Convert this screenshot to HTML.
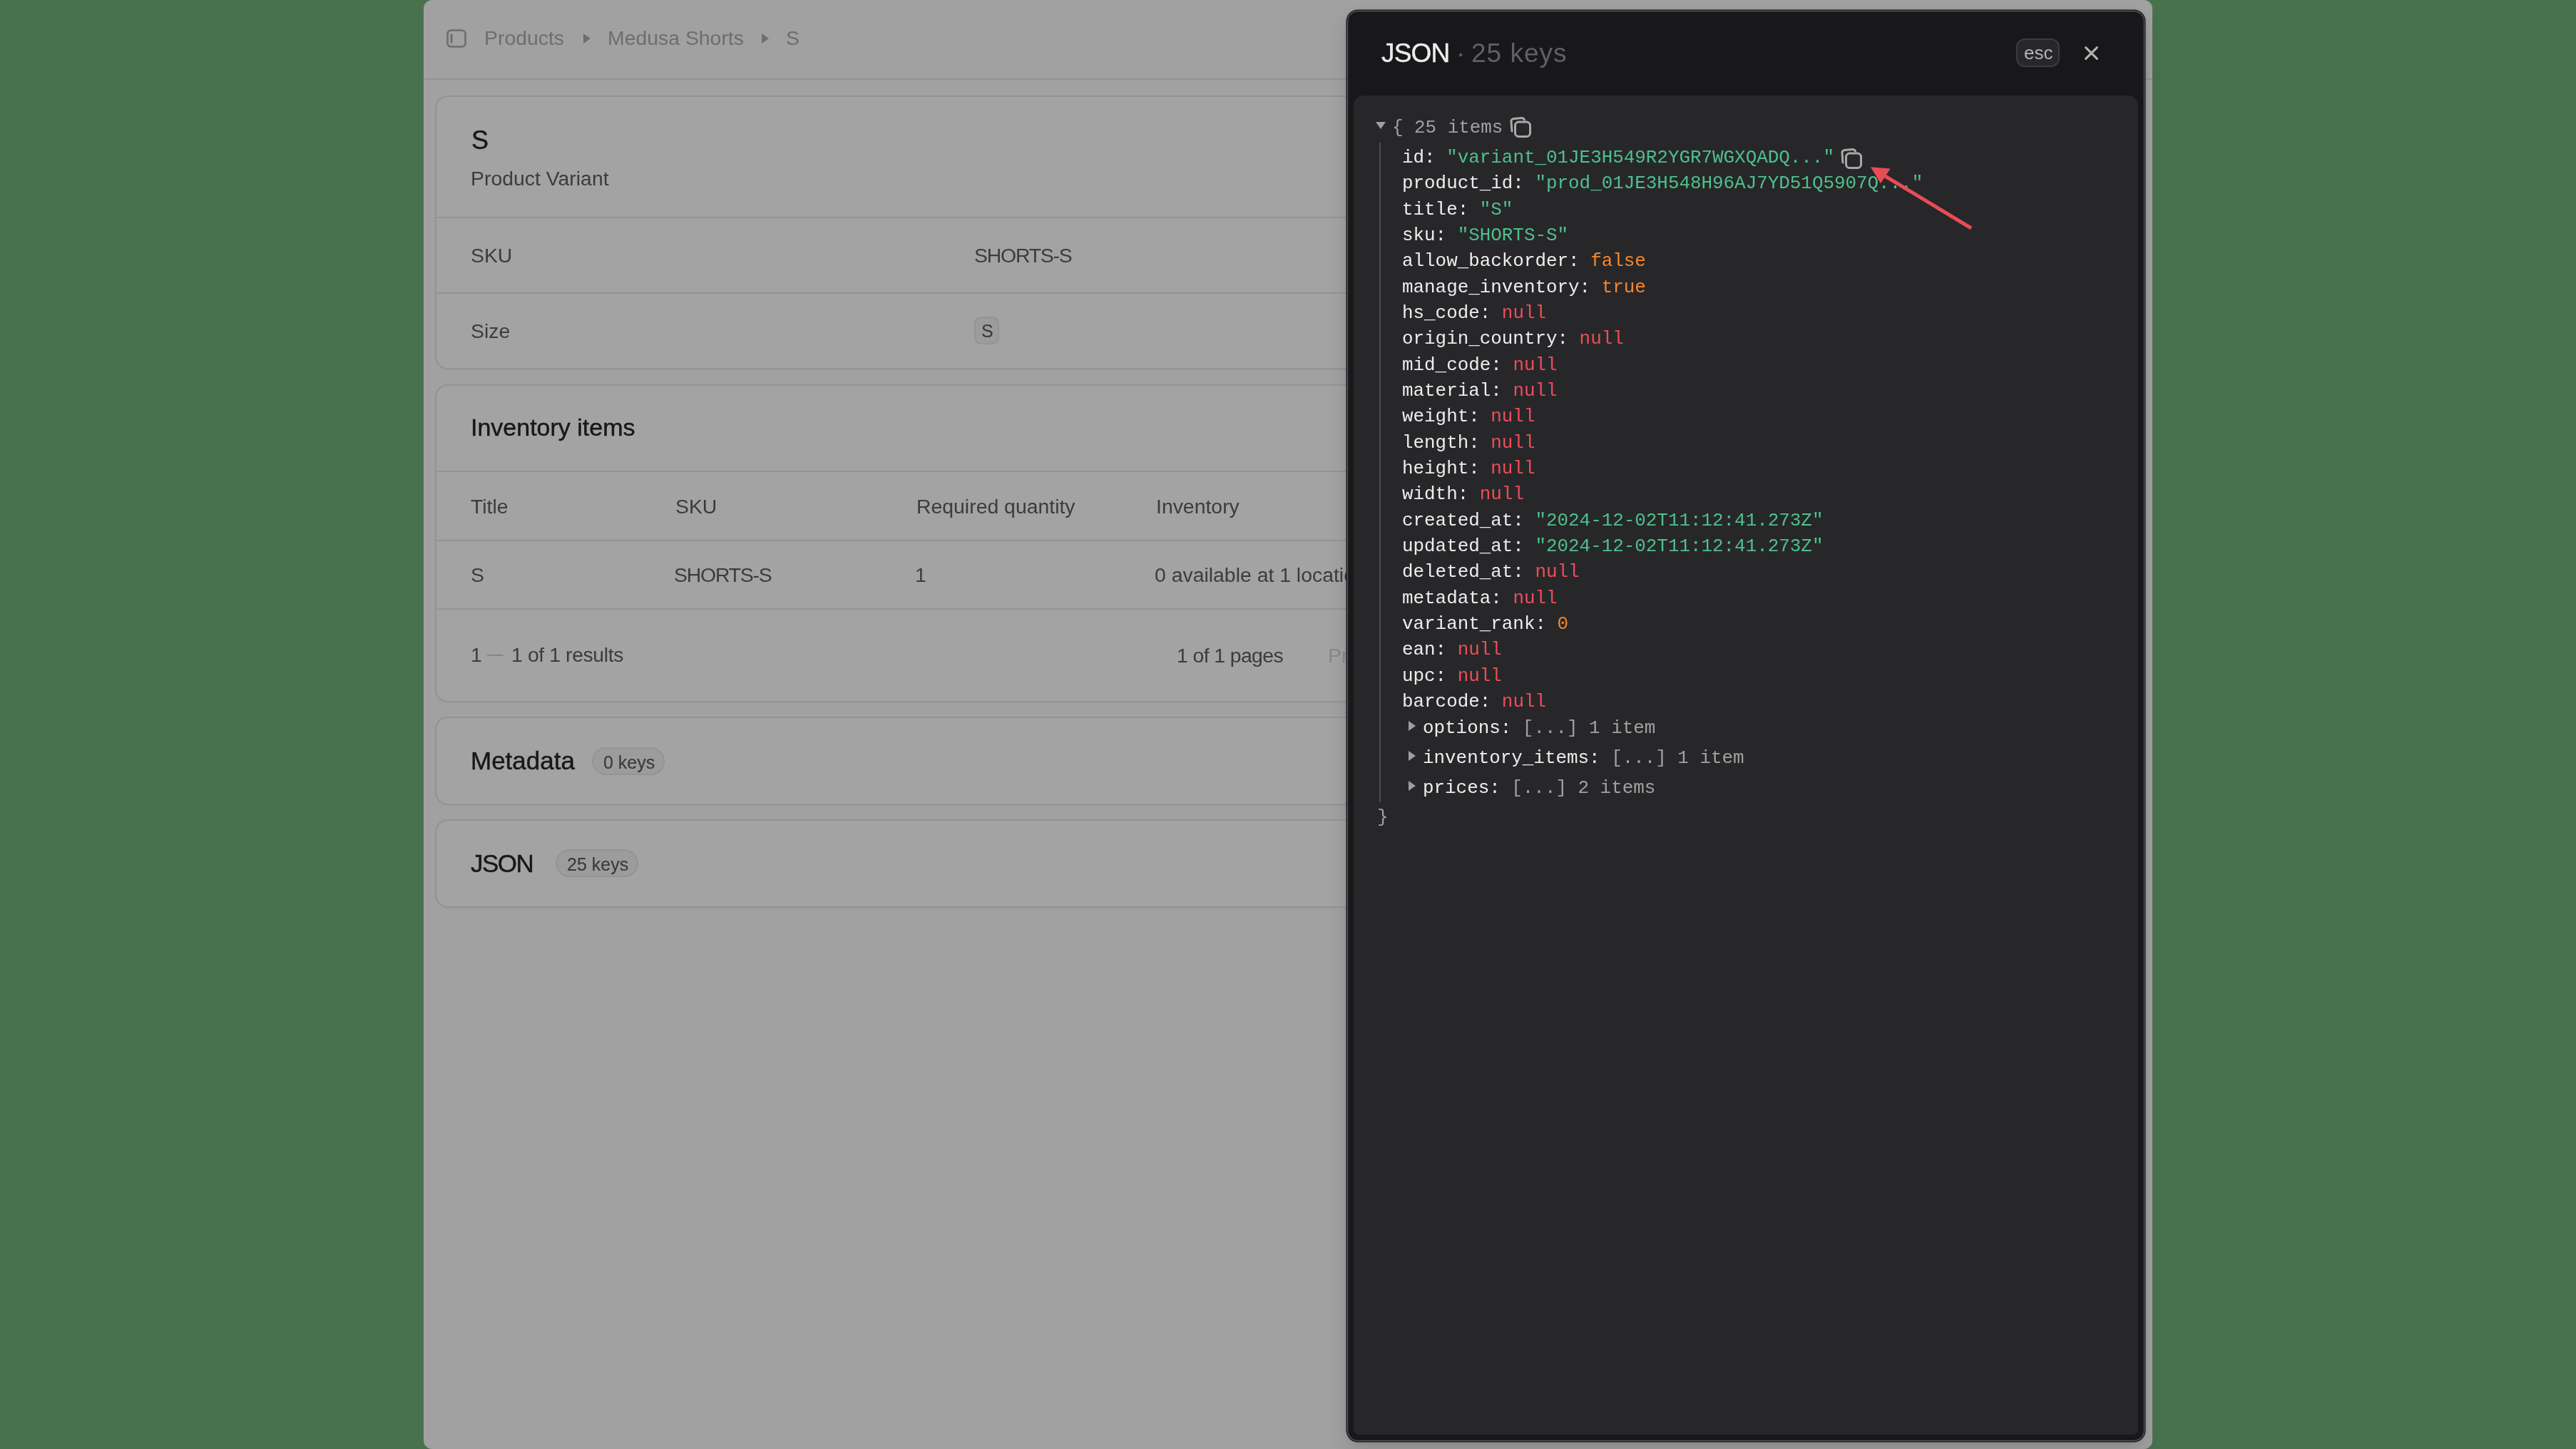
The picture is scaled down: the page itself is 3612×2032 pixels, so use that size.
<!DOCTYPE html>
<html><head><meta charset="utf-8">
<style>
html,body{margin:0;padding:0;}
body{width:3612px;height:2032px;overflow:hidden;background:#48714d;position:relative;font-family:"Liberation Sans",sans-serif;}
.page{position:absolute;left:594px;top:0;width:2424px;height:2032px;background:#a1a1a1;border-radius:12px;overflow:hidden;will-change:transform;}
.t{position:absolute;white-space:nowrap;line-height:1;}
.hdr{position:absolute;left:0;top:0;width:2424px;height:110px;border-bottom:2px solid #939393;}
.card{position:absolute;left:18px;width:2390px;background:#a3a3a3;border-radius:16px;box-shadow:0 0 0 2px #939397, 0 2px 4px rgba(0,0,0,0.04);}
.dv{position:absolute;left:0;right:0;height:2px;background:#939394;}
.b{font-size:28.4px;color:#3b3b41;}
.h2{font-size:35px;color:#18181b;-webkit-text-stroke:0.45px #18181b;}
.badge{position:absolute;background:#9c9c9d;box-shadow:inset 0 0 0 2px #949495;}
.sm{font-size:25px;color:#3b3b41;-webkit-text-stroke:0.2px #3b3b41;}
.drawer{position:absolute;left:1889px;top:15px;width:1118px;height:2006px;border-radius:15px;background:#18181b;box-shadow:0 0 0 1.5px #1e1e21, inset 0 0 0 1.2px #5a5a5e, 0 0 8px rgba(0,0,0,0.10), 0 14px 28px rgba(0,0,0,0.14);will-change:transform;}
.code{position:absolute;left:10px;top:120px;width:1100px;height:1877.5px;background:#27272a;border-radius:14px 14px 8px 8px;}
.m{position:absolute;white-space:pre;font-family:"Liberation Mono",monospace;font-size:25.9px;color:#ededed;}
.lines{line-height:36.33px;}
.g{color:#4fc08c}.r{color:#ee4d58}.o{color:#f7862b}.gr{color:#a1a1a1}
.card > *{margin-left:-1px;margin-top:-1px;}
.drawer > *{margin-left:-1px;margin-top:-1px;}
</style></head>
<body>
<div class="page">
  <div class="hdr">
    <svg style="position:absolute;left:32px;top:41px" width="28" height="26" viewBox="0 0 28 26"><rect x="1.5" y="1.5" width="25" height="23" rx="5" fill="none" stroke="#6e6e6e" stroke-width="2.6"/><rect x="5.5" y="6.5" width="3" height="13" rx="1.5" fill="#6e6e6e"/></svg>
    <div class="t b" style="left:85px;top:38.5px;color:#6e6e6e">Products</div>
    <svg style="position:absolute;left:224px;top:47px" width="10" height="14" viewBox="0 0 10 14"><path d="M0 0 L10 7 L0 14 Z" fill="#6e6e6e"/></svg>
    <div class="t b" style="left:258px;top:38.5px;color:#6e6e6e">Medusa Shorts</div>
    <svg style="position:absolute;left:474px;top:47px" width="10" height="14" viewBox="0 0 10 14"><path d="M0 0 L10 7 L0 14 Z" fill="#6e6e6e"/></svg>
    <div class="t b" style="left:508px;top:38.5px;color:#6e6e6e">S</div>
  </div>

  <div class="card" style="top:136px;height:380px;">
    <div class="t h2" style="left:50px;top:43.5px;font-size:36px">S</div>
    <div class="t b" style="left:49px;top:100.5px">Product Variant</div>
    <div class="dv" style="top:169px"></div>
    <div class="t b" style="left:49px;top:208.5px">SKU</div>
    <div class="t b" style="left:755px;top:208.5px;letter-spacing:-1.2px">SHORTS-S</div>
    <div class="dv" style="top:275px"></div>
    <div class="badge" style="left:755px;top:309px;width:35px;height:39px;border-radius:10px"></div>
    <div class="t sm" style="left:765px;top:317px">S</div>
    <div class="t b" style="left:49px;top:314.5px">Size</div>
  </div>

  <div class="card" style="top:541px;height:442px;">
    <div class="t h2" style="left:49px;top:42px;font-size:34px">Inventory items</div>
    <div class="dv" style="top:120px"></div>
    <div class="t b" style="left:49px;top:155.5px">Title</div>
    <div class="t b" style="left:336px;top:155.5px">SKU</div>
    <div class="t b" style="left:674px;top:155.5px">Required quantity</div>
    <div class="t b" style="left:1010px;top:155.5px">Inventory</div>
    <div class="dv" style="top:217px"></div>
    <div class="t b" style="left:49px;top:251.5px">S</div>
    <div class="t b" style="left:334px;top:251.5px;letter-spacing:-1.2px">SHORTS-S</div>
    <div class="t b" style="left:672px;top:251.5px">1</div>
    <div class="t b" style="left:1008px;top:251.5px">0 available at 1 location</div>
    <div class="dv" style="top:313px"></div>
    <div class="t b" style="left:49px;top:363.5px">1</div><div style="position:absolute;left:72px;top:377.5px;width:23px;height:2.5px;background:#858589;border-radius:1px"></div><div class="t b" style="left:106px;top:363.5px;letter-spacing:-0.4px">1 of 1 results</div>
    <div class="t b" style="left:1039px;top:364.5px;letter-spacing:-0.6px">1 of 1 pages</div>
    <div class="t b" style="left:1251px;top:364.5px;color:#88888c">Prev</div>
  </div>

  <div class="card" style="top:1007px;height:120px;">
    <div class="t h2" style="left:49px;top:43px">Metadata</div>
    <div class="badge" style="left:219px;top:42px;width:102px;height:39px;border-radius:20px"></div>
    <div class="t sm" style="left:235px;top:51px">0 keys</div>
  </div>

  <div class="card" style="top:1151px;height:120px;">
    <div class="t h2" style="left:49px;top:43px;letter-spacing:-1.5px">JSON</div>
    <div class="badge" style="left:168px;top:41px;width:116px;height:39px;border-radius:20px"></div>
    <div class="t sm" style="left:184px;top:50px">25 keys</div>
  </div>
</div>

<div class="drawer">
  <div class="t" style="left:49px;top:42px;font-size:37px;color:#ededed;-webkit-text-stroke:0.4px #ededed;letter-spacing:-0.8px">JSON</div>
  <div class="t" style="left:154px;top:42px;font-size:37px;color:#5f5f66">·</div>
  <div class="t" style="left:175px;top:42px;font-size:37px;color:#5f5f66;letter-spacing:1px">25 keys</div>
  <div style="position:absolute;left:939px;top:40px;width:61px;height:40px;box-sizing:border-box;border:2px solid #3c3c40;border-radius:12px;background:#27272a"></div>
  <div class="t" style="left:950px;top:47px;font-size:26px;color:#b4b4b9">esc</div>
  <svg style="position:absolute;left:1034.5px;top:50.5px" width="19" height="19" viewBox="0 0 19 19"><path d="M1.6 1.6 L17.4 17.4 M17.4 1.6 L1.6 17.4" stroke="#b4b4b4" stroke-width="3" stroke-linecap="round"/></svg>
  <div class="code"></div>
</div>

<div style="position:absolute;left:0;top:0;width:3612px;height:2032px;will-change:transform">
  <svg style="position:absolute;left:1929px;top:171px" width="14" height="10" viewBox="0 0 14 10"><path d="M0 0 L14 0 L7 10 Z" fill="#9e9e9e"/></svg>
  <div class="m gr" style="left:1952px;top:161px;line-height:36.33px">{ 25 items</div>
  <svg style="position:absolute;left:2116px;top:163px" width="32" height="32" viewBox="0 0 32 32"><path d="M4 21 L3 8 Q2.5 4 6.5 3.5 L17 2.5 Q20.5 2.2 21.5 5" fill="none" stroke="#a9a9a9" stroke-width="3" stroke-linecap="round"/><rect x="8.5" y="8" width="21" height="20.5" rx="5" fill="none" stroke="#a9a9a9" stroke-width="3"/></svg>
  <div style="position:absolute;left:1934px;top:200px;width:2px;height:925px;background:#4d4d52"></div>
  <div class="m lines" style="left:1966px;top:203px"><div>id: <span class="g">"variant_01JE3H549R2YGR7WGXQADQ..."</span></div><div>product_id: <span class="g">"prod_01JE3H548H96AJ7YD51Q5907Q..."</span></div><div>title: <span class="g">"S"</span></div><div>sku: <span class="g">"SHORTS-S"</span></div><div>allow_backorder: <span class="o">false</span></div><div>manage_inventory: <span class="o">true</span></div><div>hs_code: <span class="r">null</span></div><div>origin_country: <span class="r">null</span></div><div>mid_code: <span class="r">null</span></div><div>material: <span class="r">null</span></div><div>weight: <span class="r">null</span></div><div>length: <span class="r">null</span></div><div>height: <span class="r">null</span></div><div>width: <span class="r">null</span></div><div>created_at: <span class="g">"2024-12-02T11:12:41.273Z"</span></div><div>updated_at: <span class="g">"2024-12-02T11:12:41.273Z"</span></div><div>deleted_at: <span class="r">null</span></div><div>metadata: <span class="r">null</span></div><div>variant_rank: <span class="o">0</span></div><div>ean: <span class="r">null</span></div><div>upc: <span class="r">null</span></div><div>barcode: <span class="r">null</span></div></div>
  <svg style="position:absolute;left:2580px;top:207px" width="32" height="32" viewBox="0 0 32 32"><path d="M4 21 L3 8 Q2.5 4 6.5 3.5 L17 2.5 Q20.5 2.2 21.5 5" fill="none" stroke="#a9a9a9" stroke-width="3" stroke-linecap="round"/><rect x="8.5" y="8" width="21" height="20.5" rx="5" fill="none" stroke="#a9a9a9" stroke-width="3"/></svg>
  <svg style="position:absolute;left:1975px;top:1011px" width="10" height="14" viewBox="0 0 10 14"><path d="M0 0 L10 7 L0 14 Z" fill="#9e9e9e"/></svg>
  <svg style="position:absolute;left:1975px;top:1053px" width="10" height="14" viewBox="0 0 10 14"><path d="M0 0 L10 7 L0 14 Z" fill="#9e9e9e"/></svg>
  <svg style="position:absolute;left:1975px;top:1095px" width="10" height="14" viewBox="0 0 10 14"><path d="M0 0 L10 7 L0 14 Z" fill="#9e9e9e"/></svg>
  <div class="m" style="left:1995px;top:1003px;line-height:36.33px">options: <span class="gr">[...] 1 item</span></div>
  <div class="m" style="left:1995px;top:1045px;line-height:36.33px">inventory_items: <span class="gr">[...] 1 item</span></div>
  <div class="m" style="left:1995px;top:1087px;line-height:36.33px">prices: <span class="gr">[...] 2 items</span></div>
  <div class="m gr" style="left:1931px;top:1128px;line-height:36.33px">}</div>
  <svg style="position:absolute;left:2600px;top:220px" width="180" height="120" viewBox="2600 220 180 120"><path d="M2764 320 L2640 245" stroke="#e84c55" stroke-width="5" stroke-linecap="butt"/><path d="M2623 234.3 L2650.6 236.6 L2637 257.3 Z" fill="#e84c55"/></svg>
</div>
</body></html>
